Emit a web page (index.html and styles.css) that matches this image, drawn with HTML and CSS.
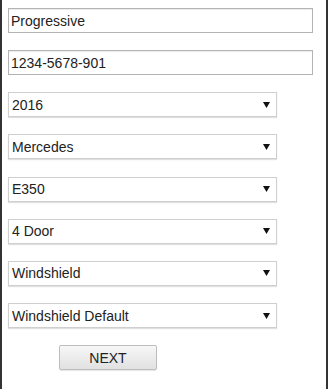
FILE: index.html
```html
<!DOCTYPE html>
<html lang="en">
<head>
  <meta charset="UTF-8" />
  <meta name="viewport" content="width=device-width, initial-scale=1.0" />
  <title>Vehicle Details</title>
  <link rel="stylesheet" href="styles.css">
</head>
<body>
  <div class="frame">
    <form class="claim-form">
      <input type="text" class="field" value="Progressive">
      <input type="text" class="field" value="1234-5678-901">

      <select class="pick">
        <option>2016</option>
      </select>
      <select class="pick">
        <option>Mercedes</option>
      </select>
      <select class="pick">
        <option>E350</option>
      </select>
      <select class="pick">
        <option>4 Door</option>
      </select>
      <select class="pick">
        <option>Windshield</option>
      </select>
      <select class="pick">
        <option>Windshield Default</option>
      </select>

      <button type="button" class="next-button">NEXT</button>
    </form>
  </div>
</body>
</html>
```

FILE: styles.css
```css
html, body {
  margin: 0;
  padding: 0;
  background: #fff;
}

body {
  font-family: 'Liberation Sans', Arial, sans-serif;
  color: #222;
}

.frame {
  box-sizing: border-box;
  height: 389px;
  border-left: 2px solid #333;
  border-right: 2px solid #333;
  padding: 8px 0 0 6px;
}

.claim-form {
  display: flex;
  flex-direction: column;
  align-items: flex-start;
  gap: 17.17px;
}

.field,
.pick {
  box-sizing: border-box;
  height: 25px;
  margin: 0;
  font-family: 'Liberation Sans', Arial, sans-serif;
  font-size: 14px;
  color: #222;
  background-color: #fff;
}

.field {
  width: 305px;
  padding: 0 0 0 2px;
  border: 1px solid #b4b4b4;
  box-shadow: inset 0 1px 1px rgba(0, 0, 0, 0.08);
  outline: none;
}

.pick {
  width: 269px;
  padding: 0 20px 0 3px;
  border: 1px solid #cfcfcf;
  border-radius: 0;
  box-shadow: 0 1px 1px rgba(0, 0, 0, 0.12);
  appearance: none;
  -webkit-appearance: none;
  background-image: url("data:image/svg+xml,%3Csvg xmlns='http://www.w3.org/2000/svg' width='7' height='6'%3E%3Cpath d='M0 0h7L3.5 6z' fill='%23111'/%3E%3C/svg%3E");
  background-repeat: no-repeat;
  background-position: right 6px center;
}

.next-button {
  box-sizing: border-box;
  width: 98px;
  height: 25px;
  margin-left: 51px;
  padding: 0;
  font-family: 'Liberation Sans', Arial, sans-serif;
  font-size: 14px;
  color: #222;
  border: 1px solid #bdbdbd;
  border-radius: 2px;
  background: linear-gradient(#f7f7f7, #e1e1e1);
  box-shadow: 0 1px 1px rgba(0, 0, 0, 0.1);
  cursor: pointer;
}
```
